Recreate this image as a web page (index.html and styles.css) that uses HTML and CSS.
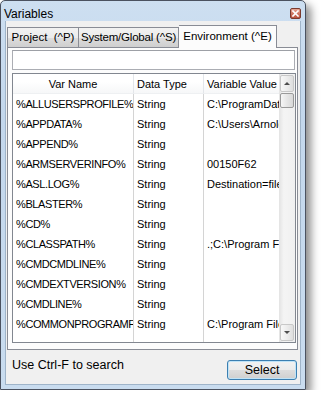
FILE: index.html
```html
<!DOCTYPE html>
<html lang="en">
<head>
    <meta charset="UTF-8">
    <title>Variables</title>
    <link rel="stylesheet" href="styles.css">
</head>
<body>
    <div class="window">
        <div class="titlebar">
            <span class="title">Variables</span>
            <span class="close-btn">
                <svg width="7" height="7" viewBox="0 0 7 7"><path d="M1 1 L6 6 M6 1 L1 6" stroke="#fff" stroke-width="1.6" stroke-linecap="square"/></svg>
            </span>
        </div>

        <div class="client">
            <div class="tabs">
                <div class="tab tab-project">Project&nbsp; (^P)</div>
                <div class="tab tab-system">System/Global (^S)</div>
                <div class="tab tab-env active">Environment (^E)</div>
            </div>

            <div class="panel">
                <div class="search-box"></div>

                <div class="list">
                    <div class="table" id="table">
                        <div class="head center">Var Name</div>
                        <div class="head">Data Type</div>
                        <div class="head last">Variable Value</div>
                    </div>
                    <div class="scrollbar">
                        <div class="sb-btn"><span class="arrow up"></span></div>
                        <div class="sb-thumb"></div>
                        <div class="sb-track"></div>
                        <div class="sb-btn"><span class="arrow down"></span></div>
                    </div>
                </div>
            </div>

            <div class="footer">
                <span class="hint">Use Ctrl-F to search</span>
                <button class="select-btn">Select</button>
            </div>
        </div>
    </div>

    <script>
        // Environment rows shown in the list
        const rows = [
            ['%ALLUSERSPROFILE%', 'String', 'C:\\ProgramData'],
            ['%APPDATA%', 'String', 'C:\\Users\\Arnold\\AppData\\Roaming'],
            ['%APPEND%', 'String', ''],
            ['%ARMSERVERINFO%', 'String', '00150F62'],
            ['%ASL.LOG%', 'String', 'Destination=file'],
            ['%BLASTER%', 'String', ''],
            ['%CD%', 'String', ''],
            ['%CLASSPATH%', 'String', '.;C:\\Program Files\\Java'],
            ['%CMDCMDLINE%', 'String', ''],
            ['%CMDEXTVERSION%', 'String', ''],
            ['%CMDLINE%', 'String', ''],
            ['%COMMONPROGRAMFILES%', 'String', 'C:\\Program Files\\Common Files']
        ];

        const classes = ['cell name', 'cell', 'cell last'];
        const table = document.getElementById('table');

        rows.forEach(row => {
            row.forEach((text, i) => {
                const cell = document.createElement('div');
                cell.className = classes[i];
                cell.textContent = text;
                table.appendChild(cell);
            });
        });

        // Filler so the column lines run to the bottom
        for (let i = 0; i < 3; i++) {
            const cell = document.createElement('div');
            cell.className = classes[i];
            table.appendChild(cell);
        }
    </script>
</body>
</html>
```

FILE: styles.css
```css
body {
    margin: 0;
    background-color: #fff;
    font-family: 'Liberation Sans', Arial, sans-serif;
    font-size: 12px;
    color: #000;
}

.window {
    width: 296px;
    height: 384px;
    border: 1px solid #4b5260;
    border-radius: 5px 5px 0 0;
    background: linear-gradient(180deg, #cddff1 0%, #c3d7ec 30%, #c9dcef 100%);
    box-shadow: 5px 5px 9px rgba(0, 0, 0, 0.45);
    display: flex;
    flex-direction: column;
    padding: 0 4px 4px 4px;
}

.titlebar {
    height: 20px;
    flex: none;
    display: flex;
    align-items: center;
    justify-content: space-between;
}

.title {
    margin-top: 5px;
    margin-left: -1px;
    font-size: 12px;
    color: #000;
}

.close-btn {
    width: 9px;
    height: 9px;
    margin-top: 5px;
    margin-right: 0;
    border: 1px solid #7a3a2e;
    border-radius: 2px;
    background: linear-gradient(180deg, #e6a595 0%, #cf7864 50%, #b9523e 100%);
    display: flex;
    align-items: center;
    justify-content: center;
}

.client {
    flex: 1;
    background-color: #f0f0f0;
    border: 1px solid #9fb4c9;
    border-top: none;
    padding-top: 4px;
    display: flex;
    flex-direction: column;
}

.tabs {
    height: 22px;
    flex: none;
    display: flex;
    align-items: flex-end;
    margin-left: 1px;
    position: relative;
    z-index: 1;
}

.tab {
    box-sizing: border-box;
    height: 20px;
    line-height: 19px;
    font-size: 11.5px;
    text-align: center;
    border: 1px solid #898c95;
    border-bottom: none;
    border-right: none;
    background: linear-gradient(180deg, #f2f2f2 0%, #ebebeb 50%, #dddddd 51%, #cfcfcf 100%);
    color: #000;
    white-space: nowrap;
}

.tab-project {
    width: 71px;
}

.tab-system {
    width: 101px;
    border-right: 1px solid #898c95;
    letter-spacing: -0.2px;
}

.tab.active {
    width: 98px;
    height: 23px;
    line-height: 21px;
    margin-bottom: -1px;
    border-left: none;
    border-right: 1px solid #898c95;
    background: #fcfcfc;
}

.panel {
    flex: none;
    margin: 0 2px 0 1px;
    height: 295px;
    border: 1px solid #898c95;
    background-color: #fcfcfc;
    padding: 2px 1px 4px 4px;
}

.search-box {
    height: 18px;
    border: 1px solid #abadb3;
    border-top-color: #9da0a6;
    background-color: #fff;
    margin-right: 1px;
}

.list {
    margin-top: 3px;
    height: 268px;
    border: 1px solid #828790;
    background-color: #fff;
    display: flex;
    overflow: hidden;
    font-size: 11px;
}

.table {
    flex: 1;
    display: grid;
    grid-template-columns: 121px 70px 1fr;
    grid-template-rows: 20px repeat(12, 20px) 1fr;
    overflow: hidden;
}

.head {
    line-height: 20px;
    padding-left: 3px;
    border-right: 1px solid #e3e6ea;
    border-bottom: 1px solid #eef0f2;
    background: linear-gradient(180deg, #ffffff 0%, #ffffff 40%, #f6f7f8 100%);
    white-space: nowrap;
    overflow: hidden;
}

.head.center {
    text-align: center;
    padding-left: 0;
}

.head.last,
.cell.last {
    border-right: none;
}

.cell {
    line-height: 20px;
    padding-left: 3px;
    border-right: 1px solid #d4d4d4;
    white-space: nowrap;
    overflow: hidden;
}

.cell.name {
    letter-spacing: -0.4px;
}

.scrollbar {
    width: 16px;
    display: flex;
    flex-direction: column;
    background: linear-gradient(90deg, #e3e3e3 0%, #f4f4f4 30%, #f0f0f0 100%);
}

.sb-btn {
    height: 15px;
    margin: 1px 1px;
    border: 1px solid #c8c8c8;
    border-radius: 2px;
    background: linear-gradient(90deg, #f8f8f8 0%, #ececec 50%, #dedede 100%);
    display: flex;
    align-items: center;
    justify-content: center;
}

.arrow {
    width: 0;
    height: 0;
    border-left: 3px solid transparent;
    border-right: 3px solid transparent;
}

.arrow.up {
    border-bottom: 3px solid #4d4d4d;
}

.arrow.down {
    border-top: 3px solid #4d4d4d;
}

.sb-thumb {
    height: 13px;
    margin: 0 1px;
    border: 1px solid #9a9a9a;
    border-radius: 2px;
    background: linear-gradient(90deg, #f6f6f6 0%, #e6e6e6 50%, #d8d8d8 100%);
}

.sb-track {
    flex: 1;
}

.footer {
    flex: 1;
    display: flex;
    justify-content: space-between;
    align-items: flex-start;
    padding: 7px 3px 0 6px;
}

.hint {
    line-height: 15px;
    margin-top: 1px;
    font-size: 12.5px;
}

.select-btn {
    margin-top: 3px;
    width: 70px;
    height: 20px;
    border: 1px solid #3c7fb1;
    border-radius: 3px;
    background: linear-gradient(180deg, #f2f2f2 0%, #ebebeb 50%, #dddddd 51%, #cfcfcf 100%);
    box-shadow: inset 0 0 0 1px #bfe3f7;
    font-family: 'Liberation Sans', Arial, sans-serif;
    font-size: 12.5px;
    color: #000;
    padding: 0;
}
```
